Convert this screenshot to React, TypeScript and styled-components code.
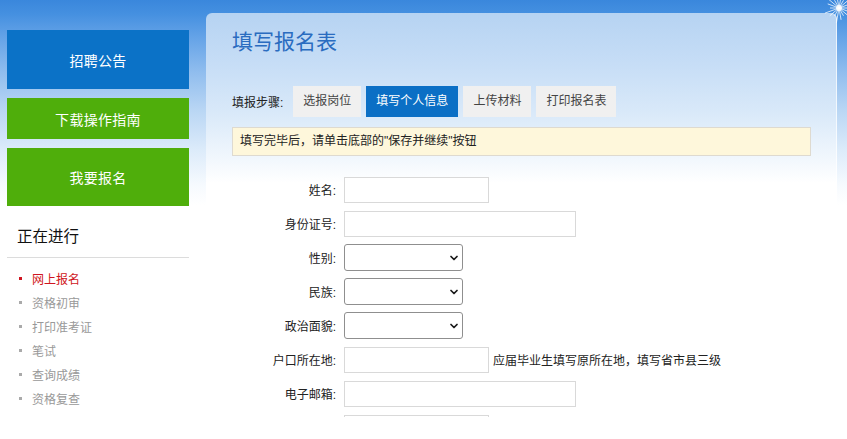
import React from "react";
import styled, { createGlobalStyle } from "styled-components";
import { ChevronDown } from "lucide-react";

const FONT = `"Liberation Sans", "Noto Sans CJK SC", sans-serif`;

const Global = createGlobalStyle`
  html, body { margin: 0; padding: 0; background: #fff; }
  body { font-family: ${FONT}; }
  * { box-sizing: border-box; }
`;

const Page = styled.div`
  position: relative;
  height: 417px;
  overflow: hidden;
  display: flex;
  align-items: flex-start;
  background: linear-gradient(
    to bottom,
    #3a87dc 0,
    #4590e0 14px,
    #63a2e7 36px,
    #90bdee 72px,
    #b9d6f4 110px,
    #dcebfa 150px,
    #f6fafe 185px,
    #fff 205px
  );
`;

const Sidebar = styled.aside`
  width: 189px;
  flex: none;
  padding: 30px 0 0 7px;
  display: flex;
  flex-direction: column;
  & > * { flex: none; }
`;

const NavButton = styled.a<{ $tone: "blue" | "green"; $h: number }>`
  display: flex;
  align-items: center;
  justify-content: center;
  width: 182px;
  height: ${(p) => p.$h}px;
  margin-bottom: 9px;
  background: ${(p) => (p.$tone === "blue" ? "#0b72c7" : "#4fae0b")};
  color: #fff;
  font-size: 14px;
  text-decoration: none;
  letter-spacing: 0.3px;
`;

const SideHeading = styled.h3`
  margin: 11px 0 0;
  width: 182px;
  padding: 0 0 9px 10px;
  line-height: 22px;
  font-size: 15.5px;
  font-weight: normal;
  color: #111;
  border-bottom: 1px solid #dcdcdc;
`;

const StageList = styled.ul`
  list-style: none;
  margin: 8px 0 0;
  padding: 0;
`;

const Stage = styled.li<{ $active?: boolean }>`
  display: flex;
  align-items: center;
  height: 24px;
  font-size: 12px;
  color: ${(p) => (p.$active ? "#cf1520" : "#999")};
  &::before {
    content: "";
    width: 3px;
    height: 3px;
    margin: 0 10px 0 12px;
    background: ${(p) => (p.$active ? "#cf1520" : "#aaa")};
  }
`;

const Panel = styled.main`
  margin: 13px 0 0 17px;
  width: 631px;
  height: 404px;
  flex: none;
  border-radius: 6px 6px 0 0;
  border-right: 1px solid rgba(255, 255, 255, 0.7);
  padding: 14px 0 0 26px;
  background: linear-gradient(
    to bottom,
    #b6d3f2 0,
    #c6ddf6 50px,
    #d9e9f9 100px,
    #f1f7fd 145px,
    #fff 170px
  );
`;

const Title = styled.h1`
  margin: 0;
  line-height: 30px;
  font-size: 21px;
  font-weight: normal;
  color: #2a6cc0;
`;

const Steps = styled.div`
  margin-top: 29px;
  display: flex;
  align-items: center;
  gap: 5px;
  height: 31px;
`;

const StepsLabel = styled.span`
  font-size: 12px;
  color: #222;
  margin-right: 5px;
`;

const StepTab = styled.span<{ $active?: boolean }>`
  height: 31px;
  line-height: 31px;
  padding: 0 10px;
  font-size: 12px;
  background: ${(p) => (p.$active ? "#0b6fc5" : "#f0f0f0")};
  color: ${(p) => (p.$active ? "#fff" : "#444")};
`;

const Notice = styled.div`
  margin-top: 10px;
  width: 579px;
  height: 29px;
  line-height: 27px;
  padding-left: 7px;
  font-size: 12px;
  color: #222;
  background: #fef7db;
  border: 1px solid #dedad0;
`;

const Form = styled.form`
  margin-top: 20px;
  display: flex;
  flex-direction: column;
`;

const Row = styled.div`
  display: flex;
  align-items: center;
  height: 27px;
  margin-bottom: 7px;
  flex: none;
`;

const Label = styled.label`
  width: 112px;
  padding-right: 8px;
  text-align: right;
  font-size: 12px;
  color: #222;
  flex: none;
`;

const TextInput = styled.input<{ $w: number }>`
  width: ${(p) => p.$w}px;
  height: 26px;
  border: 1px solid #d9d9d9;
  background: #fff;
  padding: 0 4px;
  font: 12px ${FONT};
  outline: none;
`;

const SelectWrap = styled.div`
  position: relative;
  width: 119px;
  height: 27px;
`;

const Select = styled.select`
  appearance: none;
  width: 100%;
  height: 100%;
  border: 1px solid #8f8f8f;
  border-radius: 3px;
  background: #fff;
  font: 12px ${FONT};
  padding: 0 20px 0 4px;
  outline: none;
`;

const Caret = styled(ChevronDown)`
  position: absolute;
  right: 3px;
  top: 8px;
  pointer-events: none;
  color: #1a1a1a;
`;

const Hint = styled.span`
  margin-left: 4px;
  font-size: 12px;
  color: #222;
`;

const Corner = styled.svg`
  position: absolute;
  right: 0;
  top: 0;
  pointer-events: none;
`;

const stages = ["网上报名", "资格初审", "打印准考证", "笔试", "查询成绩", "资格复查", "面试"];

function Dropdown() {
  return (
    <SelectWrap>
      <Select defaultValue="">
        <option value=""></option>
      </Select>
      <Caret size={12} strokeWidth={3.5} />
    </SelectWrap>
  );
}

export default function App() {
  const rays = Array.from({ length: 18 }, (_, i) => (i / 18) * Math.PI * 2);
  return (
    <>
      <Global />
      <Page>
        <Sidebar>
          <NavButton $tone="blue" $h={59}>招聘公告</NavButton>
          <NavButton $tone="green" $h={41}>下载操作指南</NavButton>
          <NavButton $tone="green" $h={58}>我要报名</NavButton>
          <SideHeading>正在进行</SideHeading>
          <StageList>
            {stages.map((s, i) => (
              <Stage key={s} $active={i === 0}>{s}</Stage>
            ))}
          </StageList>
        </Sidebar>
        <Panel>
          <Title>填写报名表</Title>
          <Steps>
            <StepsLabel>填报步骤:</StepsLabel>
            <StepTab>选报岗位</StepTab>
            <StepTab $active>填写个人信息</StepTab>
            <StepTab>上传材料</StepTab>
            <StepTab>打印报名表</StepTab>
          </Steps>
          <Notice>填写完毕后，请单击底部的"保存并继续"按钮</Notice>
          <Form>
            <Row>
              <Label>姓名:</Label>
              <TextInput $w={145} />
            </Row>
            <Row>
              <Label>身份证号:</Label>
              <TextInput $w={232} />
            </Row>
            <Row>
              <Label>性别:</Label>
              <Dropdown />
            </Row>
            <Row>
              <Label>民族:</Label>
              <Dropdown />
            </Row>
            <Row>
              <Label>政治面貌:</Label>
              <Dropdown />
            </Row>
            <Row>
              <Label>户口所在地:</Label>
              <TextInput $w={145} />
              <Hint>应届毕业生填写原所在地，填写省市县三级</Hint>
            </Row>
            <Row>
              <Label>电子邮箱:</Label>
              <TextInput $w={232} />
            </Row>
            <Row>
              <Label></Label>
              <TextInput $w={145} />
            </Row>
          </Form>
        </Panel>
        <Corner width="40" height="40" viewBox="0 0 40 40">
          {rays.map((a, i) => (
            <line
              key={i}
              x1={32}
              x2={32 + Math.cos(a) * (9 + (i % 3) * 3)}
              y1={8}
              y2={8 + Math.sin(a) * (9 + (i % 3) * 3)}
              stroke="#ffffff"
              strokeOpacity={0.75}
              strokeWidth={1}
            />
          ))}
          <circle cx={32} cy={8} r={3} fill="#fff" fillOpacity={0.8} />
        </Corner>
      </Page>
    </>
  );
}
